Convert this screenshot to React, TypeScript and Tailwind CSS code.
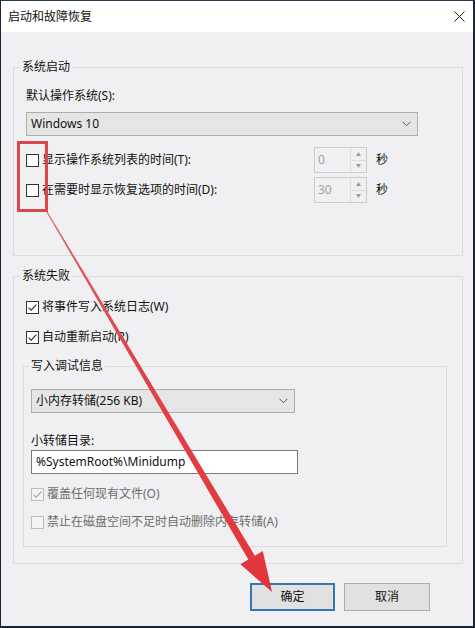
import React from "react";

const FONT = "font-['Noto_Sans','Noto_Sans_CJK_SC',sans-serif]";

function Box({ checked, disabled }: { checked?: boolean; disabled?: boolean }) {
  return (
    <span
      className={
        disabled
          ? "w-[13px] h-[13px] shrink-0 border border-[#bcbcbc] bg-[#f4f4f4] flex items-center justify-center"
          : "w-[13px] h-[13px] shrink-0 border border-[#333333] bg-white flex items-center justify-center"
      }
    >
      {checked && (
        <svg width="11" height="11" viewBox="0 0 11 11">
          <path
            d="M1.6 5.6 L4.2 8.2 L9.4 2.6"
            fill="none"
            stroke={disabled ? "#a8a8a8" : "#333333"}
            strokeWidth="1.2"
          />
        </svg>
      )}
    </span>
  );
}

function Chevron() {
  return (
    <svg width="9" height="6" viewBox="0 0 9 6">
      <path d="M0.5 0.8 L4.5 4.8 L8.5 0.8" fill="none" stroke="#555555" strokeWidth="1" />
    </svg>
  );
}

function Spinner({ value }: { value: string }) {
  return (
    <div className="w-[53px] h-[26px] border border-[#cccccc] flex">
      <div className="flex-1 flex items-center pl-[3px] text-[#a0a0a0] text-[12px]">{value}</div>
      <div className="w-[16px] border-l border-[#dddddd] flex flex-col">
        <div className="flex-1 flex items-center justify-center border-b border-[#dddddd]">
          <svg width="5" height="4" viewBox="0 0 5 4">
            <path d="M0 4 L2.5 0 L5 4 Z" fill="#9a9a9a" />
          </svg>
        </div>
        <div className="flex-1 flex items-center justify-center">
          <svg width="5" height="4" viewBox="0 0 5 4">
            <path d="M0 0 L2.5 4 L5 0 Z" fill="#9a9a9a" />
          </svg>
        </div>
      </div>
    </div>
  );
}

export default function App() {
  return (
    <div
      className={`relative w-[475px] h-[628px] overflow-hidden flex flex-col border-t border-t-[#2c3a52] border-l border-l-[#1f2530] border-r-2 border-r-[#1f2530] border-b-2 border-b-[#1f2530] text-[12px] leading-[16px] text-[#111111] ${FONT}`}
    >
      {/* title bar */}
      <div className="h-[31px] shrink-0 bg-white flex items-center justify-between pl-[7px] pr-[8px]">
        <span className="text-[12px]">启动和故障恢复</span>
        <svg width="11" height="11" viewBox="0 0 11 11">
          <path d="M0.5 0.5 L10.5 10.5 M10.5 0.5 L0.5 10.5" stroke="#222222" strokeWidth="1" />
        </svg>
      </div>

      {/* body */}
      <div className="flex-1 bg-[#f0f0f2] pt-[27px] pl-[12px] pr-[10px] flex flex-col">
        {/* 系统启动 */}
        <fieldset className="border border-[#dcdcdc]">
          <legend className="ml-[6px] px-[2px] leading-[16px]">系统启动</legend>
          <div className="pl-[12px] pt-[13px] pb-[52px]">
            <div>默认操作系统(S):</div>
            <div className="mt-[8px] w-[392px] h-[24px] bg-[#e5e5e5] border border-[#adadad] flex items-center justify-between pl-[4px] pr-[6px]">
              <span>Windows 10</span>
              <Chevron />
            </div>
            <div className="mt-[11px] flex flex-col gap-[4px]">
              <div className="h-[26px] flex items-center">
                <div className="w-[288px] flex items-center gap-[3px]">
                  <Box />
                  <span>显示操作系统列表的时间(T):</span>
                </div>
                <Spinner value="0" />
                <span className="ml-[9px]">秒</span>
              </div>
              <div className="h-[26px] flex items-center">
                <div className="w-[288px] flex items-center gap-[3px]">
                  <Box />
                  <span>在需要时显示恢复选项的时间(D):</span>
                </div>
                <Spinner value="30" />
                <span className="ml-[9px]">秒</span>
              </div>
            </div>
          </div>
        </fieldset>

        {/* 系统失败 */}
        <fieldset className="mt-[12px] border border-[#dcdcdc]">
          <legend className="ml-[6px] px-[2px] leading-[16px]">系统失败</legend>
          <div className="pl-[9px] pr-[15px] pt-[13px] pb-[16px]">
            <div className="ml-[3px] h-[20px] flex items-center gap-[3px]">
              <Box checked />
              <span>将事件写入系统日志(W)</span>
            </div>
            <div className="ml-[3px] mt-[10px] h-[20px] flex items-center gap-[3px]">
              <Box checked />
              <span>自动重新启动(R)</span>
            </div>

            <fieldset className="mt-[11px] border border-[#dcdcdc]">
              <legend className="ml-[5px] px-[2px] leading-[16px]">写入调试信息</legend>
              <div className="pl-[7px] pt-[15px] pb-[14px]">
                <div className="w-[264px] h-[24px] bg-[#e5e5e5] border border-[#adadad] flex items-center justify-between pl-[4px] pr-[6px]">
                  <span>小内存转储(256 KB)</span>
                  <Chevron />
                </div>
                <div className="mt-[20px]">小转储目录:</div>
                <div className="mt-[1px] w-[267px] h-[24px] bg-white border border-[#7a7a7a] flex items-center pl-[4px]">
                  %SystemRoot%\Minidump
                </div>
                <div className="mt-[10px] h-[20px] flex items-center gap-[3px] text-[#6d6d6d]">
                  <Box checked disabled />
                  <span>覆盖任何现有文件(O)</span>
                </div>
                <div className="mt-[8px] h-[20px] flex items-center gap-[3px] text-[#6d6d6d]">
                  <Box disabled />
                  <span>禁止在磁盘空间不足时自动删除内存转储(A)</span>
                </div>
              </div>
            </fieldset>
          </div>
        </fieldset>

        {/* buttons */}
        <div className="mt-[19px] flex justify-end gap-[9px] pr-[33px]">
          <button className="w-[85px] h-[28px] bg-[#e1e1e1] border-2 border-[#2f78b0] flex items-center justify-center">
            确定
          </button>
          <button className="w-[86px] h-[28px] bg-[#e1e1e1] border border-[#adadad] flex items-center justify-center">
            取消
          </button>
        </div>
      </div>

      {/* annotation: red box */}
      <div className="absolute left-[16px] top-[140px] w-[31px] h-[71px] border-[3px] border-[#d9474d] pointer-events-none" />

      {/* annotation: red arrow */}
      <svg className="absolute left-[-1px] top-[-1px] pointer-events-none" width="475" height="628" viewBox="0 0 475 628">
        <defs>
          <linearGradient id="ag" x1="47" y1="212" x2="272" y2="592" gradientUnits="userSpaceOnUse">
            <stop offset="0" stopColor="#d86a6e" />
            <stop offset="0.35" stopColor="#e0454a" />
            <stop offset="1" stopColor="#e2353b" />
          </linearGradient>
        </defs>
        <polygon
          points="47.5,211.7 254.9,555.7 262.8,551.0 272,592 240.4,564.2 248.3,559.5 46.5,212.3"
          fill="url(#ag)"
        />
      </svg>
    </div>
  );
}
